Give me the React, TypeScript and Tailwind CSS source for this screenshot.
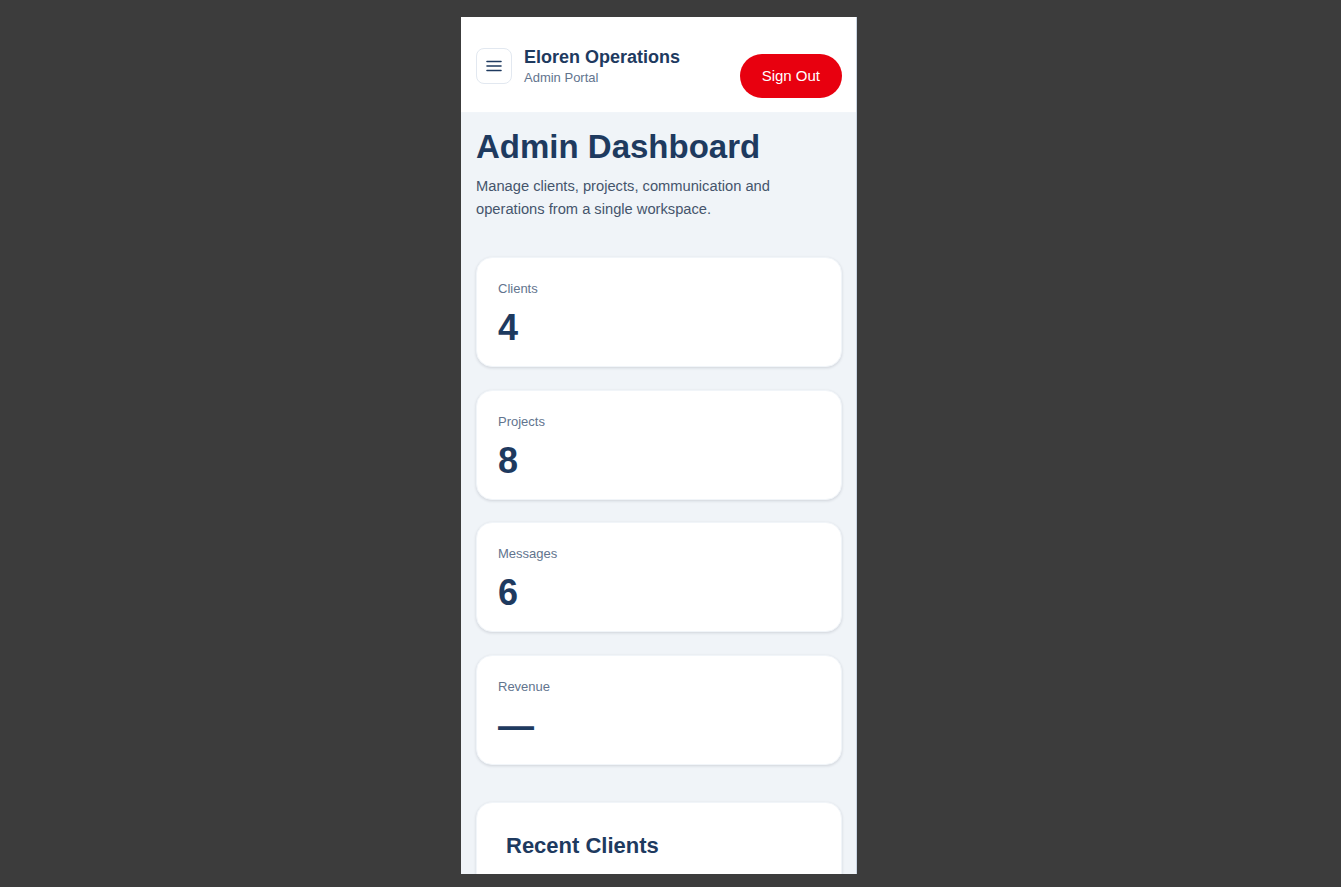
const font = "font-['Liberation_Sans',Arial,sans-serif]";

const stats = [
  { label: "Clients", value: "4" },
  { label: "Projects", value: "8" },
  { label: "Messages", value: "6" },
  { label: "Revenue", value: "—" },
];

function MenuIcon() {
  return (
    <svg width="16" height="12" viewBox="0 0 16 12" fill="none">
      <path d="M1 1.5h14M1 6h14M1 10.5h14" stroke="#1e3a5f" strokeWidth="1.6" strokeLinecap="round" />
    </svg>
  );
}

function StatCard({ label, value }: { label: string; value: string }) {
  return (
    <div className="h-[110px] rounded-2xl border border-slate-100 bg-white pl-[21px] pt-[21px] shadow-[0_1px_3px_rgba(15,23,42,0.14)]">
      <p className="text-[13px] leading-[20px] text-slate-500">{label}</p>
      <p className="mt-[7px] text-[36px] font-bold leading-[43px] text-[#1e3a5f]">{value}</p>
    </div>
  );
}

export default function App() {
  return (
    <div className={`min-h-screen bg-[#3c3c3c] pt-[17px] ${font}`}>
      <div className="ml-[461px] h-[857px] w-[396px] overflow-hidden border-r border-slate-300 bg-[#f0f4f8]">
        {/* Top bar */}
        <header className="flex items-start justify-between border-b border-slate-100 bg-white pb-[14px] pl-[15px] pr-[14px] pt-[29px]">
          <div className="flex items-center gap-3">
            <button className="flex h-9 w-9 items-center justify-center rounded-lg border border-slate-200 bg-white">
              <MenuIcon />
            </button>
            <div>
              <h1 className="text-[18px] font-bold leading-[22px] text-[#1e3a5f]">Eloren Operations</h1>
              <p className="mt-[1px] text-[13px] leading-[17px] text-slate-500">Admin Portal</p>
            </div>
          </div>
          <button className="mt-[8px] h-11 rounded-full bg-[#e8000f] px-[22px] text-[15px] text-white">
            Sign Out
          </button>
        </header>

        <main className="pl-[15px] pr-[14px] pt-[14px]">
          <h2 className="text-[33px] font-bold leading-[40px] text-[#1e3a5f]">Admin Dashboard</h2>
          <p className="mt-[8px] text-[14.7px] leading-[23px] text-slate-600">
            Manage clients, projects, communication and operations from a single workspace.
          </p>

          <div className="mt-[36px] flex flex-col gap-[22.5px]">
            {stats.map((s) => (
              <StatCard key={s.label} label={s.label} value={s.value} />
            ))}
          </div>

          <section className="mt-[37px] rounded-2xl border border-slate-100 bg-white px-[29px] pb-6 pt-[28px] shadow-[0_1px_3px_rgba(15,23,42,0.14)]">
            <h3 className="text-[22px] font-bold leading-[29px] text-[#1e3a5f]">Recent Clients</h3>
            <div className="h-40" />
          </section>
        </main>
      </div>
    </div>
  );
}
